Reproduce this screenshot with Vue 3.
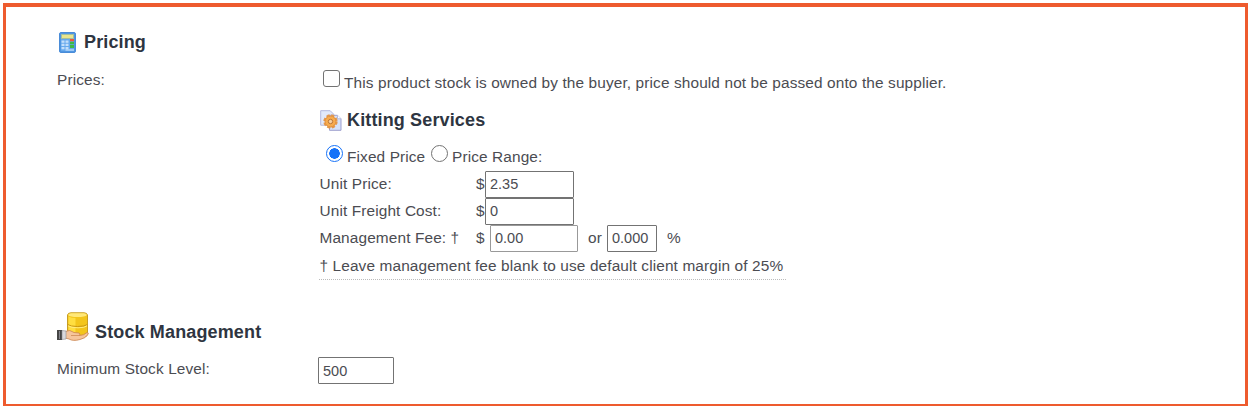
<template>
  <div class="panel">
    <section class="section">
      <h2 class="section__title section__title--pricing">
        <svg class="icon-calculator" viewBox="0 0 17 21" aria-hidden="true">
          <rect x="0.5" y="0.5" width="16" height="20" rx="1.5" fill="#4f96e2" stroke="#4a8cd8" />
          <rect x="2" y="2" width="13" height="17" fill="#66a9ec" />
          <rect x="2.5" y="2.5" width="12" height="4" fill="#e9e58d" stroke="#a4bf9c" />
          <g fill="#c3dffb">
            <rect x="2.5" y="8.5" width="3" height="2.3" />
            <rect x="6.5" y="8.5" width="3" height="2.3" />
            <rect x="2.5" y="11.7" width="3" height="2.3" />
            <rect x="6.5" y="11.7" width="3" height="2.3" />
            <rect x="2.5" y="15" width="3" height="2.3" />
            <rect x="6.5" y="15" width="3" height="2.3" />
          </g>
          <rect x="11" y="7" width="4" height="2.3" fill="#ef553c" />
          <rect x="11" y="9.8" width="4" height="2.5" fill="#3dbb45" />
          <rect x="11" y="13" width="4" height="3" fill="#3dbb45" />
          <path d="M6.5 18h8.5" stroke="#d5eaff" />
        </svg>
        <span>Pricing</span>
      </h2>

      <div class="row">
        <div class="row__label">Prices:</div>
        <div class="row__content">
          <label class="owned">
            <input v-model="ownedByBuyer" type="checkbox" class="checkbox" />
            <span class="owned__text">This product stock is owned by the buyer, price should not be passed onto the supplier.</span>
          </label>

          <h2 class="section__title section__title--kitting">
            <svg class="icon-kitting" viewBox="0 0 22 21" aria-hidden="true">
              <path d="M.7.7h9.5l3.5 3.5v11H.7z" fill="#e1e9fb" stroke="#b3b9df" />
              <path d="M9.5 5.3h8l3.5 3.5v11.5H9.5z" fill="#d5e2fa" stroke="#9e9fce" />
              <path d="M17.5 5.3v3.5H21" fill="#fff" stroke="#b3b9df" />
              <circle cx="10.5" cy="11.5" r="6.2" fill="none" stroke="#e39a50" stroke-width="2" stroke-dasharray="3.2 1.67" />
              <circle cx="10.5" cy="11.5" r="5.5" fill="#f7ab4d" stroke="#e08c38" />
              <circle cx="10.5" cy="11.5" r="2.2" fill="#f5cfa0" stroke="#bd7434" />
            </svg>
            <span>Kitting Services</span>
          </h2>

          <div class="modes">
            <input v-model="priceMode" type="radio" value="fixed" class="radio" aria-label="Fixed Price" />
            <span class="modes__text modes__text--fixed">Fixed Price</span>
            <input v-model="priceMode" type="radio" value="range" class="radio" aria-label="Price Range" />
            <span class="modes__text">Price Range:</span>
          </div>

          <div v-for="line in lines" :key="line.label" class="line">
            <span class="line__label">{{ line.label }}</span>
            <span class="line__currency">$</span>
            <input v-model="line.value" type="text" class="field" :aria-label="line.label" />
          </div>
          <div class="line">
            <span class="line__label">Management Fee: †</span>
            <span class="line__currency line__currency--fee">$</span>
            <input v-model="fee" type="text" class="field field--fee" aria-label="Management Fee" />
            <span class="line__or">or</span>
            <input v-model="feePercent" type="text" class="field field--percent" aria-label="Management Fee percent" />
            <span class="line__percent">%</span>
          </div>
          <div class="note">† Leave management fee blank to use default client margin of 25%</div>
        </div>
      </div>
    </section>

    <section class="section">
      <h2 class="section__title section__title--stock">
        <svg class="icon-stock" viewBox="0 0 32 29" aria-hidden="true">
          <path d="M10.5 3Q11 .8 14 .8h13q3 0 3.5 2.2v20q-2 3-10 3t-10-3z" fill="#f3c51b" stroke="#c79d24" />
          <path d="M11 3q1-1.700 3-1.700h13q2 0 3 1.700-2 2-9.500 2T11 3z" fill="#ffe879" />
          <path d="M11.5 4.500q3 1.500 7 1.500v18q-5 0-7-2z" fill="#ffde40" />
          <path d="M10.5 12.500q3 2 10 2t10-2" fill="none" stroke="#c99712" />
          <path d="M11 13.800q3 2 10 2t9-2" fill="none" stroke="#ffeb80" />
          <path d="M8 19.500q5-2.500 9 1l5 .5q2 1 0 2.500 5 0 8-3 2 0 1 2-3 4-8 5-7 2-11-.5l-4-1z" fill="#f6c59c" stroke="#c9844f" stroke-width=".8" />
          <path d="M14 23.500h8" stroke="#d79664" />
          <path d="M0 18h5v10H0z" fill="#454545" />
          <path d="M5 18.500l4 .5v8l-4 .5z" fill="#d9d9dd" stroke="#8b8b8f" stroke-width=".6" />
          <path d="M2.500 19v8" stroke="#85858b" />
        </svg>
        <span>Stock Management</span>
      </h2>

      <div class="row row--stock">
        <div class="row__label">Minimum Stock Level:</div>
        <div class="row__content">
          <input v-model="minimumStock" type="text" class="field field--stock" aria-label="Minimum Stock Level" />
        </div>
      </div>
    </section>
  </div>
</template>

<script setup>
import { ref } from 'vue'

const ownedByBuyer = ref(false)
const priceMode = ref('fixed')
const lines = ref([
  { label: 'Unit Price:', value: '2.35' },
  { label: 'Unit Freight Cost:', value: '0' },
])
const fee = ref('0.00')
const feePercent = ref('0.000')
const minimumStock = ref('500')
</script>

<style>
body {
  background: #fff;
  overflow: hidden;
}
</style>

<style scoped>
.panel {
  box-sizing: border-box;
  width: 1245px;
  height: 403px;
  margin: 3px 0 0 3px;
  padding: 22px 0 0 51px;
  border: 3px solid #ee5b2e;
  border-top-width: 4px;
  border-bottom-width: 2px;
  display: flow-root;
  font: 15.4px/20px "Liberation Sans", Arial, sans-serif;
  letter-spacing: .12px;
  color: #4b4c52;
}

/* headings */
.section__title {
  display: flex;
  align-items: center;
  margin: 0;
  height: 26px;
  font-size: 18px;
  line-height: 26px;
  letter-spacing: .14px;
  color: #2e3541;
}
.section__title--pricing { gap: 8px; padding-left: 2px; }
.section__title--kitting {
  gap: 5px;
  margin-top: 13px;
  padding-left: 1px;
}
.section__title--stock {
  gap: 6px;
  height: 32px;
  margin-top: 30px;
}
.section__title--stock span { padding-top: 11px; }

.icon-calculator { width: 17px; height: 21px; }
.icon-kitting { width: 22px; height: 21px; }
.icon-stock { width: 32px; height: 29px; }

/* rows */
.row { display: flex; }
.row--stock { padding-top: 2px; }
.row__label {
  width: 262px;
  padding-top: 15px;
}
.row__content { padding-top: 13px; }

.owned {
  display: flex;
  height: 26px;
  padding-left: 3px;
}
.owned__text { padding: 5px 0 0 4px; white-space: nowrap; }

.checkbox,
.radio {
  box-sizing: border-box;
  flex: none;
  appearance: none;
  width: 17px;
  height: 17px;
  margin: 2px 0 0;
  border: 1px solid #737373;
  border-radius: 3px;
  background: #fff;
}
.checkbox { margin-left: 1px; }
.radio {
  margin: 0;
  border-radius: 50%;
}
.radio:checked {
  border-color: #1672f8;
  background: radial-gradient(circle, #1672f8 5px, #fff 5.5px);
}

.modes {
  display: flex;
  height: 26px;
  margin-top: 12px;
  padding-left: 7px;
}
.modes__text { padding: 2px 0 0 4px; }
.modes__text--fixed { width: 84px; }

.line {
  display: flex;
  align-items: center;
  height: 27px;
}
.line span { padding-bottom: 2px; }
.line__label {
  width: 156.5px;
  padding-left: .5px;
}
.line__currency { width: 9px; }
.line__currency--fee { width: 14px; }
.line__or { width: 14px; margin: 0 5px 0 10px; }
.line__percent { margin-left: 10px; }

.field {
  box-sizing: border-box;
  width: 89px;
  height: 27px;
  padding: 0 4px 2px;
  border: 1px solid #737373;
  border-radius: 1px;
  background: #fff;
  font: inherit;
  font-size: 14.5px;
  letter-spacing: 0;
  color: inherit;
  outline: none;
}
.field--fee {
  width: 88px;
  border-color: #999;
}
.field--percent { width: 50px; }
.field--stock {
  display: block;
  width: 76px;
  padding-bottom: 0;
  margin-left: -1px;
}

.note {
  box-sizing: border-box;
  width: 467px;
  height: 28px;
  padding: 4px 0 0 .5px;
  border-bottom: 1px dotted #bbb;
  white-space: nowrap;
}
</style>
